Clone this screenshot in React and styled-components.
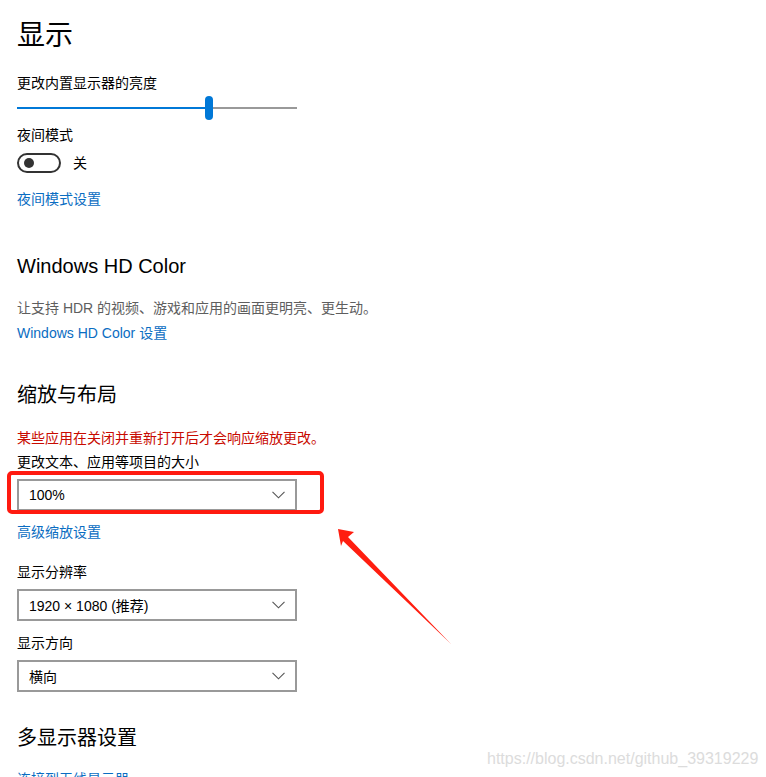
import React from "react";
import styled, { createGlobalStyle } from "styled-components";

const GlobalStyle = createGlobalStyle`
  html, body {
    margin: 0;
    padding: 0;
    background: #fff;
  }
  body {
    font-family: "Segoe UI", "Liberation Sans", "Noto Sans CJK SC", sans-serif;
    color: #000;
    overflow: hidden;
  }
`;

function Dropdown({ value, highlight }) {
  return (
    <SelectBox>
      <span>{value}</span>
      <Chevron width="13" height="8" viewBox="0 0 13 8">
        <path d="M0.5 0.8 L6.5 6.8 L12.5 0.8" fill="none" stroke="#555" strokeWidth="1.1" />
      </Chevron>
      {highlight && <Highlight />}
    </SelectBox>
  );
}

function App() {
  return (
    <Page>
      <GlobalStyle />
      <Title>显示</Title>
      <Label $mt={17}>更改内置显示器的亮度</Label>
      <Slider>
        <Track $filled style={{ width: 188 }} />
        <Thumb />
        <Track />
      </Slider>
      <Label $mt={5}>夜间模式</Label>
      <ToggleRow>
        <Toggle>
          <Knob />
        </Toggle>
        <span>关</span>
      </ToggleRow>
      <Link $mt={16}>夜间模式设置</Link>

      <Heading $mt={43}>Windows HD Color</Heading>
      <Hint $mt={18}>让支持 HDR 的视频、游戏和应用的画面更明亮、更生动。</Hint>
      <Link $mt={5}>Windows HD Color 设置</Link>

      <Heading $mt={38}>缩放与布局</Heading>
      <Warning $mt={19}>某些应用在关闭并重新打开后才会响应缩放更改。</Warning>
      <Label $mt={4}>更改文本、应用等项目的大小</Label>
      <Dropdown value="100%" highlight />
      <Link $mt={11}>高级缩放设置</Link>
      <Label $mt={20}>显示分辨率</Label>
      <Dropdown value="1920 × 1080 (推荐)" />
      <Label $mt={12}>显示方向</Label>
      <Dropdown value="横向" />

      <Heading $mt={32}>多显示器设置</Heading>
      <Link $mt={17}>连接到无线显示器</Link>

      <Arrow width="766" height="777" viewBox="0 0 766 777">
        <polygon
          points="338,529 354,532 348,537 451,644 343,541 341,546"
          fill="#ff1e10"
        />
      </Arrow>
      <Watermark>https://blog.csdn.net/github_39319229</Watermark>
    </Page>
  );
}

export default App;

const Page = styled.div`
  position: relative;
  width: 766px;
  height: 777px;
  box-sizing: border-box;
  padding: 16px 0 0 17px;
  overflow: hidden;
`;

const Title = styled.h1`
  margin: 0;
  font-size: 28px;
  font-weight: 400;
  line-height: 40px;
`;

const Heading = styled.h2`
  margin: ${(p) => p.$mt}px 0 0;
  font-size: 20px;
  font-weight: 400;
  line-height: 28px;
`;

const Label = styled.div`
  margin-top: ${(p) => p.$mt}px;
  font-size: 14px;
  line-height: 20px;
`;

const Hint = styled(Label)`
  color: #5e5e5e;
`;

const Warning = styled(Label)`
  color: #c80a00;
`;

const Link = styled(Label)`
  color: #0a6dc2;
  cursor: pointer;
`;

const Slider = styled.div`
  margin-top: 3px;
  width: 280px;
  height: 24px;
  display: flex;
  align-items: center;
`;

const Track = styled.div`
  height: 2px;
  flex: ${(p) => (p.$filled ? "none" : "1")};
  background: ${(p) => (p.$filled ? "#0078d7" : "#999")};
`;

const Thumb = styled.div`
  width: 8px;
  height: 24px;
  border-radius: 4px;
  background: #0078d7;
`;

const ToggleRow = styled.div`
  margin-top: 8px;
  display: flex;
  align-items: center;
  gap: 12px;
  font-size: 14px;
  line-height: 20px;
`;

const Toggle = styled.div`
  box-sizing: border-box;
  width: 44px;
  height: 20px;
  border: 2px solid #333;
  border-radius: 10px;
  display: flex;
  align-items: center;
  padding-left: 5px;
`;

const Knob = styled.div`
  width: 10px;
  height: 10px;
  border-radius: 50%;
  background: #333;
`;

const SelectBox = styled.div`
  position: relative;
  margin-top: 7px;
  box-sizing: border-box;
  width: 280px;
  height: 32px;
  border: 2px solid #999;
  display: flex;
  align-items: center;
  justify-content: space-between;
  padding: 0 10px 0 10px;
  font-size: 14px;
`;

const Chevron = styled.svg`
  display: block;
`;

const Highlight = styled.div`
  position: absolute;
  left: -12px;
  top: -10px;
  right: -29px;
  bottom: -5px;
  border: 4px solid #ff1a10;
  border-radius: 5px;
  pointer-events: none;
`;

const Arrow = styled.svg`
  position: absolute;
  left: 0;
  top: 0;
  pointer-events: none;
`;

const Watermark = styled.div`
  position: absolute;
  left: 487px;
  top: 749px;
  font-family: "Liberation Sans", Arial, sans-serif;
  font-size: 16px;
  line-height: 20px;
  color: #dcdcdc;
`;
